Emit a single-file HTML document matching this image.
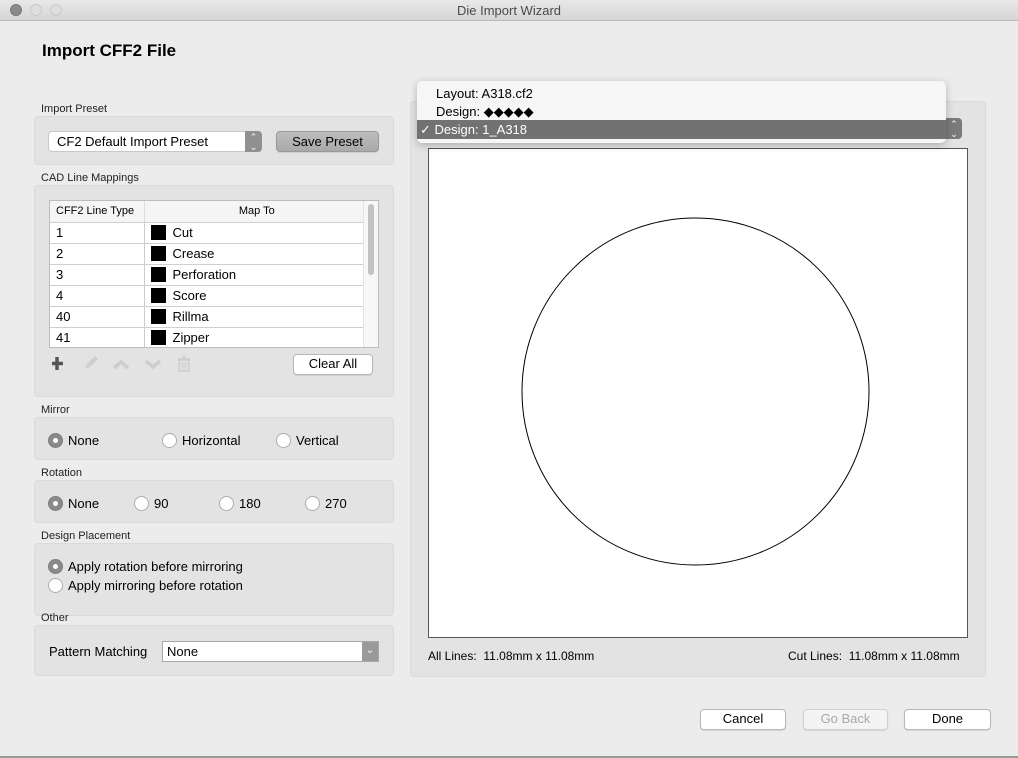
<!DOCTYPE html>
<html><head><meta charset="utf-8"><style>
*{margin:0;padding:0;box-sizing:border-box}
body{width:1018px;height:758px;background:#ececec;font-family:"Liberation Sans",Arial,sans-serif;font-size:13px;color:#000;position:relative;overflow:hidden}
.a{position:absolute}
.tb{left:0;top:0;width:1018px;height:21px;background:linear-gradient(#e8e8e8,#d6d6d6);border-bottom:1px solid #b9b9b9;text-align:center;line-height:21px;font-size:13px;color:#4a4a4a}
.dot{width:12px;height:12px;border-radius:50%;top:4px;border:1px solid #c9c9c9;background:#dedede}
.box{background:#e3e3e3;border:1px solid #dadada;border-radius:4px}
.lbl{font-size:11px;color:#222}
.btn{background:#fff;border:1px solid #b8b8b8;border-radius:4px;text-align:center;line-height:18px;font-size:13px;box-shadow:0 1px 1px rgba(0,0,0,.1)}
.radio{width:15px;height:15px;border-radius:50%;background:#fff;border:1px solid #adadad}
.radio.on{background:#8a8a8a;border-color:#7e7e7e}
.radio.on::after{content:"";position:absolute;left:4px;top:4px;width:5px;height:5px;border-radius:50%;background:#fff}
.rt{font-size:13px}
td{height:21px;border-bottom:1px solid #cfcfcf;font-size:13px;padding-left:6px}
.sw{display:inline-block;width:15px;height:15px;background:#000;vertical-align:-3px;margin-right:7px}
</style></head><body>
<div class="a tb">Die Import Wizard</div>
<div class="a dot" style="left:10px;background:#8a8a8a;border-color:#7a7a7a"></div>
<div class="a dot" style="left:30px"></div>
<div class="a dot" style="left:50px"></div>
<div class="a" style="left:42px;top:41px;font-size:17px;font-weight:bold">Import CFF2 File</div>

<div class="a lbl" style="left:41px;top:103px">Import Preset</div>
<div class="a box" style="left:34px;top:116px;width:360px;height:49px"></div>
<div class="a" style="left:48px;top:131px;width:214px;height:21px;background:#fff;border:1px solid #c8c8c8;border-radius:4px;padding-left:8px;line-height:19px">CF2 Default Import Preset</div>
<div class="a" style="left:245px;top:131px;width:17px;height:21px;background:#909090;border-radius:0 4px 4px 0;color:#fff;font-size:9px;text-align:center;line-height:10px;padding-top:1px">⌃<br>⌄</div>
<div class="a btn" style="left:276px;top:131px;width:103px;height:21px;background:linear-gradient(#bdbdbd,#a9a9a9);border-color:#999;line-height:20px">Save Preset</div>

<div class="a lbl" style="left:41px;top:172px">CAD Line Mappings</div>
<div class="a box" style="left:34px;top:185px;width:360px;height:212px"></div>
<div class="a" style="left:49px;top:200px;width:330px;height:148px;background:#fff;border:1px solid #bdbdbd;overflow:hidden">
<table style="border-collapse:collapse;width:313px">
<tr><td style="width:94px;font-size:11px;background:#f5f5f5;border-right:1px solid #ddd">CFF2 Line Type</td><td style="font-size:11px;text-align:center;background:#f5f5f5">Map To</td></tr>
<tr><td style="border-right:1px solid #ccc">1</td><td><span class="sw"></span>Cut</td></tr>
<tr><td style="border-right:1px solid #ccc">2</td><td><span class="sw"></span>Crease</td></tr>
<tr><td style="border-right:1px solid #ccc">3</td><td><span class="sw"></span>Perforation</td></tr>
<tr><td style="border-right:1px solid #ccc">4</td><td><span class="sw"></span>Score</td></tr>
<tr><td style="border-right:1px solid #ccc">40</td><td><span class="sw"></span>Rillma</td></tr>
<tr><td style="border-right:1px solid #ccc">41</td><td><span class="sw"></span>Zipper</td></tr>
</table>
<div class="a" style="left:313px;top:0;width:16px;height:148px;background:#f7f7f7;border-left:1px solid #e3e3e3"></div>
<div class="a" style="left:318px;top:3px;width:6px;height:71px;background:#c2c2c2;border-radius:3px"></div>
</div>
<svg class="a" style="left:50px;top:355px" width="145" height="18">
<path d="M4 2v13M-1 8.5h11" stroke="#555" stroke-width="3.5" transform="translate(3,0)"/>
<path d="M35 14l2-5 8-8 3 3-8 8z" fill="#cdcdcd"/>
<path d="M64 13l7-6 7 6" fill="none" stroke="#cdcdcd" stroke-width="3.5"/>
<path d="M96 6l7 6 7-6" fill="none" stroke="#cdcdcd" stroke-width="3.5"/>
<path d="M128 4h12M132 2h4M129 5h10v11h-10z" fill="none" stroke="#cdcdcd" stroke-width="1.6"/>
<path d="M132 7v7M134 7v7M136 7v7" stroke="#cdcdcd" stroke-width="1"/>
</svg>
<div class="a btn" style="left:293px;top:354px;width:80px;height:21px">Clear All</div>

<div class="a lbl" style="left:41px;top:404px">Mirror</div>
<div class="a box" style="left:34px;top:417px;width:360px;height:43px"></div>
<div class="a radio on" style="left:48px;top:433px"></div><div class="a rt" style="left:68px;top:433px">None</div>
<div class="a radio" style="left:162px;top:433px"></div><div class="a rt" style="left:182px;top:433px">Horizontal</div>
<div class="a radio" style="left:276px;top:433px"></div><div class="a rt" style="left:296px;top:433px">Vertical</div>

<div class="a lbl" style="left:41px;top:467px">Rotation</div>
<div class="a box" style="left:34px;top:480px;width:360px;height:43px"></div>
<div class="a radio on" style="left:48px;top:496px"></div><div class="a rt" style="left:68px;top:496px">None</div>
<div class="a radio" style="left:134px;top:496px"></div><div class="a rt" style="left:154px;top:496px">90</div>
<div class="a radio" style="left:219px;top:496px"></div><div class="a rt" style="left:239px;top:496px">180</div>
<div class="a radio" style="left:305px;top:496px"></div><div class="a rt" style="left:325px;top:496px">270</div>

<div class="a lbl" style="left:41px;top:530px">Design Placement</div>
<div class="a box" style="left:34px;top:543px;width:360px;height:73px"></div>
<div class="a radio on" style="left:48px;top:559px"></div><div class="a rt" style="left:68px;top:559px">Apply rotation before mirroring</div>
<div class="a radio" style="left:48px;top:578px"></div><div class="a rt" style="left:68px;top:578px">Apply mirroring before rotation</div>

<div class="a lbl" style="left:41px;top:612px">Other</div>
<div class="a box" style="left:34px;top:625px;width:360px;height:51px"></div>
<div class="a rt" style="left:49px;top:644px">Pattern Matching</div>
<div class="a" style="left:162px;top:641px;width:217px;height:21px;background:#fff;border:1px solid #a8a8a8;padding-left:4px;line-height:19px">None</div>
<div class="a" style="left:362px;top:642px;width:16px;height:19px;background:#9a9a9a;color:#fff;font-size:10px;text-align:center;line-height:17px">⌄</div>

<div class="a box" style="left:410px;top:101px;width:576px;height:576px"></div>
<div class="a" style="left:946px;top:118px;width:16px;height:21px;background:#7a7a7a;border-radius:0 4px 4px 0;color:#fff;font-size:9px;text-align:center;line-height:10px;padding-top:1px">⌃<br>⌄</div>
<div class="a" style="left:428px;top:148px;width:540px;height:490px;background:#fff;border:1px solid #555"></div>
<svg class="a" style="left:0;top:0" width="1018" height="758"><circle cx="695.5" cy="391.5" r="173.5" fill="none" stroke="#000" stroke-width="1"/></svg>
<div class="a" style="left:428px;top:649px;font-size:12px">All Lines:&nbsp; 11.08mm x 11.08mm</div>
<div class="a" style="left:788px;top:649px;font-size:12px">Cut Lines:&nbsp; 11.08mm x 11.08mm</div>

<div class="a" style="left:417px;top:81px;width:529px;height:62px;background:#f6f6f6;border-radius:5px;box-shadow:0 2px 8px rgba(0,0,0,.25);overflow:hidden">
<div class="a" style="left:19px;top:5px;font-size:13px">Layout: A318.cf2</div>
<div class="a" style="left:19px;top:23px;font-size:13px">Design: ◆◆◆◆◆</div>
<div class="a" style="left:0;top:39px;width:529px;height:19px;background:#727272;color:#fff;padding-left:3px;line-height:19px">✓ Design: 1_A318</div>
</div>

<div class="a btn" style="left:700px;top:709px;width:86px;height:21px">Cancel</div>
<div class="a btn" style="left:803px;top:709px;width:85px;height:21px;background:#f4f4f4;color:#a8a8a8;border-color:#d0d0d0">Go Back</div>
<div class="a btn" style="left:904px;top:709px;width:87px;height:21px">Done</div>
<div class="a" style="left:0;top:756px;width:1018px;height:2px;background:#9a9a9a"></div>
</body></html>
